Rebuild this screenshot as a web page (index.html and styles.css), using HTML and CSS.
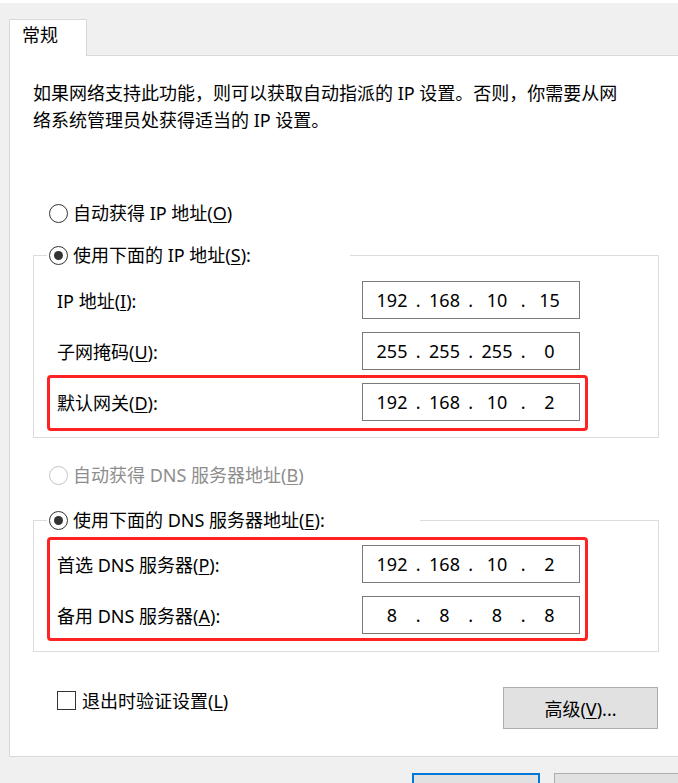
FILE: index.html
```html
<!DOCTYPE html>
<html lang="zh-CN">
<head>
  <meta charset="UTF-8">
  <title>Internet 协议版本 4 (TCP/IPv4) 属性</title>
  <link rel="stylesheet" href="styles.css">
</head>
<body>

<div class="top-strip"></div>

<div class="tabs">
  <div class="tab">常规</div>
</div>

<div class="panel">
  <p class="desc">如果网络支持此功能，则可以获取自动指派的 IP 设置。否则，你需要从网<br>络系统管理员处获得适当的 IP 设置。</p>

  <div class="opt first"><span class="radio"></span><span>自动获得 IP 地址(<u>O</u>)</span></div>

  <fieldset class="group ip-group">
    <legend class="opt"><span class="radio checked"></span><span>使用下面的 IP 地址(<u>S</u>):</span></legend>
    <div class="row">
      <span class="label">IP 地址(<u>I</u>):</span>
      <div class="ipbox"><span class="oct">192</span><span class="dot">.</span><span class="oct">168</span><span class="dot">.</span><span class="oct">10</span><span class="dot">.</span><span class="oct">15</span></div>
    </div>
    <div class="row">
      <span class="label">子网掩码(<u>U</u>):</span>
      <div class="ipbox"><span class="oct">255</span><span class="dot">.</span><span class="oct">255</span><span class="dot">.</span><span class="oct">255</span><span class="dot">.</span><span class="oct">0</span></div>
    </div>
    <div class="row mark">
      <span class="label">默认网关(<u>D</u>):</span>
      <div class="ipbox"><span class="oct">192</span><span class="dot">.</span><span class="oct">168</span><span class="dot">.</span><span class="oct">10</span><span class="dot">.</span><span class="oct">2</span></div>
    </div>
  </fieldset>

  <div class="opt disabled auto-dns"><span class="radio"></span><span>自动获得 DNS 服务器地址(<u>B</u>)</span></div>

  <fieldset class="group dns-group">
    <legend class="opt"><span class="radio checked"></span><span>使用下面的 DNS 服务器地址(<u>E</u>):</span></legend>
    <div class="mark">
      <div class="row">
        <span class="label">首选 DNS 服务器(<u>P</u>):</span>
        <div class="ipbox"><span class="oct">192</span><span class="dot">.</span><span class="oct">168</span><span class="dot">.</span><span class="oct">10</span><span class="dot">.</span><span class="oct">2</span></div>
      </div>
      <div class="row">
        <span class="label">备用 DNS 服务器(<u>A</u>):</span>
        <div class="ipbox"><span class="oct">8</span><span class="dot">.</span><span class="oct">8</span><span class="dot">.</span><span class="oct">8</span><span class="dot">.</span><span class="oct">8</span></div>
      </div>
    </div>
  </fieldset>

  <div class="bottom">
    <label class="check"><span class="box"></span><span>退出时验证设置(<u>L</u>)</span></label>
    <button class="btn advanced">高级(<u>V</u>)...</button>
  </div>
</div>

<div class="footer">
  <button class="btn ok"></button>
  <button class="btn cancel"></button>
</div>

</body>
</html>
```

FILE: styles.css
```css
body { margin:0; width:678px; height:783px; overflow:hidden; background:#f0f0f0; color:#000; font-family:"Noto Sans","Noto Sans CJK SC",sans-serif; font-size:18px; }
u { text-decoration-thickness:1px; text-underline-offset:2px; }

.top-strip { height:3px; background:#fff; }

.tabs { margin-top:16px; padding-left:9px; display:flex; }
.tab { position:relative; z-index:1; width:78px; height:37px; box-sizing:border-box; margin-bottom:-1px; padding:1px 0 0 12px; line-height:28px; background:#fff; border:1px solid #d9d9d9; border-bottom:none; }

.panel { width:669px; height:702px; box-sizing:border-box; margin-left:9px; padding:24px 0 0 23px; background:#fff; border:1px solid #d9d9d9; border-right:none; }

.desc { margin:0; line-height:27px; white-space:nowrap; }

.opt { display:flex; align-items:center; gap:5px; height:28px; line-height:28px; white-space:nowrap; }
.opt.first { margin:65px 0 0 16px; }
.radio { width:19px; height:19px; box-sizing:border-box; border:1.5px solid #333; border-radius:50%; display:flex; align-items:center; justify-content:center; }
.radio.checked::after { content:""; width:9px; height:9px; border-radius:50%; background:#333; }
.disabled { color:#8d8d8d; }
.disabled .radio { border-color:#c4c4c4; }
.auto-dns { margin:23px 0 0 16px; }

.group { width:626px; box-sizing:border-box; min-width:0; margin:0; border:1px solid #dcdcdc; padding:12px 0 16px 13px; }
.group legend { padding:0 2px; box-sizing:border-box; }
.ip-group { margin-top:14px; }
.ip-group legend { width:303px; }
.dns-group { margin-top:17px; padding:11px 0 17px 13px; }
.dns-group legend { width:373px; }

.row { display:flex; align-items:center; justify-content:space-between; width:525px; height:38px; margin-left:8px; }
.row + .row { margin-top:13px; }
.mark .row { margin-left:0; }
.dns-group .mark { margin-left:8px; width:525px; }
.label { padding-left:2px; white-space:nowrap; }
.mark { position:relative; }
.mark::after { content:""; position:absolute; top:-8px; right:-8px; bottom:-10px; left:-8px; border:3px solid #ff2222; border-radius:4px; pointer-events:none; }
.dns-group .mark::after { bottom:-7px; }

.ipbox { width:218px; height:38px; box-sizing:border-box; border:1px solid #7a7a7a; padding-left:9px; display:flex; align-items:center; line-height:36px; }
.oct { width:40px; text-align:center; }
.dot { width:12.5px; text-align:center; }

.bottom { width:625px; display:flex; justify-content:space-between; align-items:flex-start; margin-top:34px; }
.check { display:flex; align-items:center; gap:6px; height:28px; margin-left:24px; }
.box { width:19px; height:19px; box-sizing:border-box; border:1.5px solid #333; }

.btn { font:inherit; color:#000; background:#e1e1e1; border:1px solid #adadad; padding:0; }
.advanced { width:155px; height:42px; margin-top:1px; }

.footer { display:flex; gap:14px; margin-top:16px; padding-left:412px; }
.footer .btn { width:128px; height:10px; flex:none; border-bottom:none; }
.footer .ok { border:2px solid #0078d7; border-bottom:none; }
.footer .cancel { width:124px; border-right:none; }
```
